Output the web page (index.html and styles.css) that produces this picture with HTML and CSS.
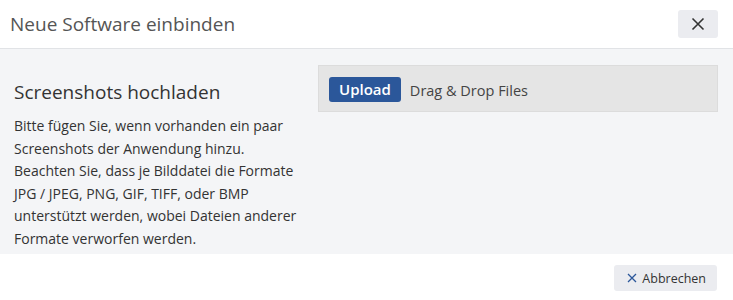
FILE: index.html
```html
<!DOCTYPE html>
<html lang="de">
<head>
<meta charset="utf-8">
<link rel="stylesheet" href="styles.css">
</head>
<body>
<div class="dialog">
  <header class="dlg-header">
    <h1 class="dlg-title">Neue Software einbinden</h1>
    <button class="close-btn" aria-label="Schließen">
      <svg width="14" height="14" viewBox="0 0 14 14"><path d="M1.5 1.5L12.5 12.5M12.5 1.5L1.5 12.5" stroke="#333" stroke-width="1.6" fill="none"/></svg>
    </button>
  </header>
  <main class="dlg-body">
    <section class="info">
      <h2 class="info-title">Screenshots hochladen</h2>
      <p class="info-text">Bitte fügen Sie, wenn vorhanden ein paar Screenshots der Anwendung hinzu. Beachten Sie, dass je Bilddatei die Formate JPG / JPEG, PNG, GIF, TIFF, oder BMP unterstützt werden, wobei Dateien anderer Formate verworfen werden.</p>
    </section>
    <section class="upload">
      <div class="dropzone">
        <button class="upload-btn">Upload</button>
        <span class="drop-label">Drag &amp; Drop Files</span>
      </div>
    </section>
  </main>
  <footer class="dlg-footer">
    <button class="cancel-btn">
      <svg width="10" height="10" viewBox="0 0 10 10"><path d="M1 1L9 9M9 1L1 9" stroke="#2b579a" stroke-width="1.3" fill="none"/></svg>
      Abbrechen
    </button>
  </footer>
</div>
</body>
</html>
```
FILE: styles.css
```css
html, body {
  margin: 0;
  padding: 0;
  background: #ffffff;
}
body {
  font-family: "Open Sans", "Noto Sans", sans-serif;
  color: #323130;
  width: 733px;
  height: 300px;
  overflow: hidden;
}
.dialog {
  display: flex;
  flex-direction: column;
  height: 300px;
}
.dlg-header {
  display: flex;
  align-items: center;
  justify-content: space-between;
  height: 48px;
  padding: 0 15px 0 10px;
  border-bottom: 1px solid #e1e3e6;
}
.dlg-title {
  margin: 0 0 1px;
  font-size: 19px;
  font-weight: 400;
  color: #555;
}
.close-btn {
  width: 40px;
  height: 28px;
  border: none;
  border-radius: 3px;
  background: #ebecf0;
  display: flex;
  align-items: center;
  justify-content: center;
  padding: 0;
}
.dlg-body {
  background: #f4f5f7;
  height: 205px;
  display: grid;
  grid-template-columns: 290px 400px;
  column-gap: 14px;
  padding: 16px 15px 0 14px;
  box-sizing: border-box;
}
.info-title {
  margin: 14px 0 0;
  font-size: 19px;
  font-weight: 400;
  color: #333;
  line-height: 26px;
}
.info-text {
  margin: 10px 0 0;
  font-size: 14px;
  line-height: 22.6px;
  color: #333;
}
.dropzone {
  display: flex;
  align-items: center;
  gap: 9px;
  height: 47px;
  box-sizing: border-box;
  padding: 1px 10px 0;
  background: #e5e5e5;
  border: 1px solid #dcdcdc;
}
.upload-btn {
  font-family: inherit;
  height: 25px;
  padding: 0 10px;
  border: none;
  border-radius: 3px;
  background: #2b579a;
  color: #fff;
  font-size: 15px;
  font-weight: 600;
}
.drop-label {
  font-size: 14.5px;
  color: #444;
  padding-top: 3px;
}
.dlg-footer {
  display: flex;
  justify-content: flex-end;
  padding: 11px 16px 0 0;
}
.cancel-btn {
  font-family: inherit;
  display: flex;
  align-items: center;
  gap: 5px;
  height: 26px;
  padding: 0 11px 0 13px;
  border: none;
  border-radius: 3px;
  background: #ebecf0;
  color: #333;
  font-size: 12.5px;
}
```
